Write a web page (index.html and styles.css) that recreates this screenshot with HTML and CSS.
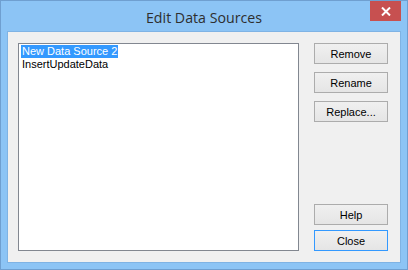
FILE: index.html
```html
<!DOCTYPE html>
<html lang="en">
<head>
  <meta charset="UTF-8">
  <title>Edit Data Sources</title>
  <link rel="stylesheet" href="styles.css">
</head>
<body>
  <div class="window">
    <div class="titlebar">
      <span class="title">Edit Data Sources</span>
      <button class="close-x" aria-label="Close">
        <svg width="10" height="9" viewBox="0 0 10 9">
          <path d="M1 0.5 L9 8.5 M9 0.5 L1 8.5" stroke="#fff" stroke-width="2" fill="none"/>
        </svg>
      </button>
    </div>
    <div class="client">
      <ul class="listbox">
        <li class="item selected">New Data Source 2</li>
        <li class="item">InsertUpdateData</li>
      </ul>
      <div class="actions">
        <div class="group">
          <button class="btn">Remove</button>
          <button class="btn">Rename</button>
          <button class="btn">Replace...</button>
        </div>
        <div class="group bottom">
          <button class="btn">Help</button>
          <button class="btn default">Close</button>
        </div>
      </div>
    </div>
  </div>
</body>
</html>
```

FILE: styles.css
```css
body {
  margin: 0;
  font-family: "Liberation Sans", Arial, sans-serif;
}
.window {
  width: 408px;
  height: 270px;
  box-sizing: border-box;
  border: 1px solid #6f9fd0;
  background: #8cc4f5;
  display: flex;
  flex-direction: column;
}
.titlebar {
  position: relative;
  height: 30px;
  display: flex;
  align-items: center;
  justify-content: center;
}
.title {
  font-family: "Open Sans", sans-serif;
  font-size: 14.2px;
  color: #2e2e2e;
  margin-top: 2px;
}
.close-x {
  position: absolute;
  top: 0;
  right: 6px;
  width: 31px;
  height: 20px;
  padding: 0;
  border: none;
  background: #c75050;
  display: flex;
  align-items: center;
  justify-content: center;
}
.client {
  margin: 0 6px 6px 6px;
  flex: 1;
  border: 1px solid #7fb3e4;
  background: #f0f0f0;
  display: flex;
  padding: 11px 11px 11px 10px;
  gap: 15px;
}
.listbox {
  margin: 0;
  width: 281px;
  box-sizing: border-box;
  list-style: none;
  padding: 1px 2px;
  background: #fff;
  border: 1px solid #828790;
}
.item {
  font-size: 11px;
  line-height: 13px;
  height: 13px;
  color: #000;
  padding: 0 1px;
  display: table;
}
.selected {
  background: #3399ff;
  color: #fff;
}
.actions {
  width: 74px;
  display: flex;
  flex-direction: column;
  justify-content: space-between;
}
.group {
  display: flex;
  flex-direction: column;
  gap: 8px;
}
.group.bottom {
  gap: 5px;
}
.btn {
  height: 21px;
  padding: 0;
  font-family: "Liberation Sans", Arial, sans-serif;
  font-size: 11px;
  color: #000;
  border: 1px solid #acacac;
  background: linear-gradient(#f0f0f0, #e5e5e5);
}
.btn.default {
  border-color: #3399ff;
}
```
